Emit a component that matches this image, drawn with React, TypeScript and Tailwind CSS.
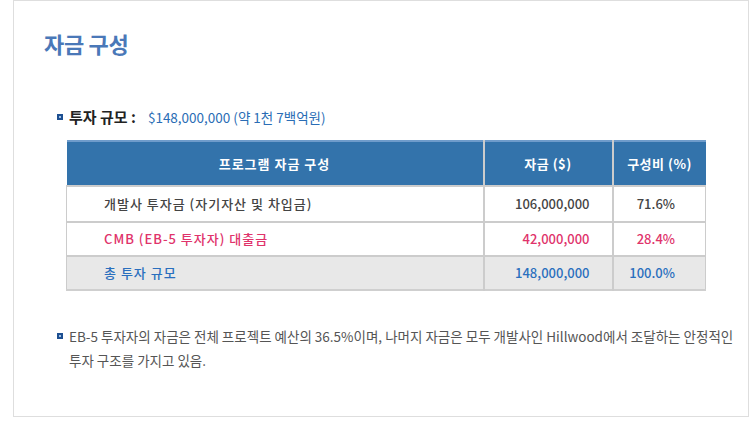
import React from "react";

const font = { fontFamily: '"Noto Sans CJK KR", "Noto Sans", sans-serif' };

const Bullet = () => (
  <span className="block w-[6px] h-[6px] bg-[#1d4f91] border border-[#1d4f91] shrink-0">
    <span className="block w-[2px] h-[2px] m-[1px] bg-[#9fc0e6]" />
  </span>
);

const rows = [
  { label: "개발사 투자금 (자기자산 및 차입금)", amount: "106,000,000", ratio: "71.6%", color: "text-[#444444]", bg: "bg-white", h: "h-[36px]" },
  { label: "CMB (EB-5 투자자) 대출금", amount: "42,000,000", ratio: "28.4%", color: "text-[#e0336b]", bg: "bg-white", h: "h-[34px]" },
  { label: "총 투자 규모", amount: "148,000,000", ratio: "100.0%", color: "text-[#2a6fbe]", bg: "bg-[#e8e8e8]", h: "h-[34px]" },
];

export default function App() {
  return (
    <div className="w-[750px] h-[429px] bg-white" style={font}>
      <div className="ml-[13px] w-[736px] h-[417px] border border-[#dedede] pl-[30px] pt-[27px]">
        <h1 className="text-[22px] leading-[30px] font-bold text-[#4a78b8] tracking-[-0.3px]">자금 구성</h1>

        <div className="mt-[49px] ml-[13px] flex items-center gap-[6px] h-[20px]">
          <Bullet />
          <span className="text-[15px] font-bold text-[#222222]">투자 규모 :</span>
          <span className="ml-[6px] text-[13.5px] text-[#2a6db5]">$148,000,000 (약 1천 7백억원)</span>
        </div>

        <table className="mt-[13px] ml-[22px] w-[640px] border-collapse text-[13px] font-medium">
          <thead>
            <tr className="h-[45px] bg-[#3373ab] text-white border-t-2 border-[#6f9ccb]">
              <th className="font-bold text-center tracking-[1px]">프로그램 자금 구성</th>
              <th className="w-[129px] font-bold text-center tracking-[0.5px] border-l-2 border-[#cccccc]">자금 ($)</th>
              <th className="w-[93px] font-bold text-center tracking-[0.5px] border-l-2 border-[#cccccc]">구성비 (%)</th>
            </tr>
          </thead>
          <tbody>
            {rows.map((r, i) => (
              <tr
                key={r.label}
                className={`${r.h} ${r.bg} ${r.color} ${i === rows.length - 1 ? "border-b-2 border-b-[#cfcfcf]" : ""}`}
              >
                <td className="pl-[37px] tracking-[1px] border-l border-t-2 border-[#cccccc]">{r.label}</td>
                <td className="pr-[22px] text-right border-l-2 border-t-2 border-[#cccccc]">{r.amount}</td>
                <td className="pr-[30px] text-right border-l-2 border-r border-t-2 border-[#cccccc]">{r.ratio}</td>
              </tr>
            ))}
          </tbody>
        </table>

        <div className="mt-[33px] ml-[13px] flex items-start gap-[6px] pr-[6px]">
          <span className="pt-[9px]">
            <Bullet />
          </span>
          <p className="text-[13.5px] leading-[24px] text-[#555555]">
            EB-5 투자자의 자금은 전체 프로젝트 예산의 36.5%이며, 나머지 자금은 모두 개발사인 Hillwood에서 조달하는 안정적인 투자 구조를 가지고 있음.
          </p>
        </div>
      </div>
    </div>
  );
}
